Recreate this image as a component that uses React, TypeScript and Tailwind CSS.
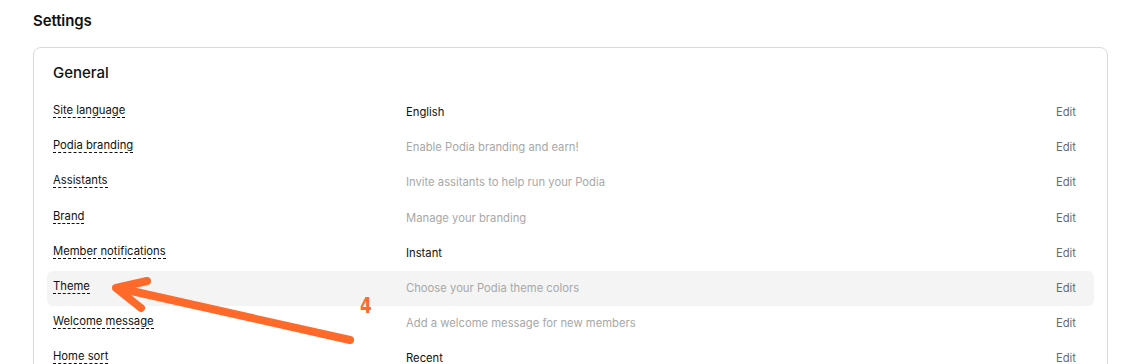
import React from "react";

const rows: { label: string; value: string; muted: boolean; active?: boolean }[] = [
  { label: "Site language", value: "English", muted: false },
  { label: "Podia branding", value: "Enable Podia branding and earn!", muted: true },
  { label: "Assistants", value: "Invite assitants to help run your Podia", muted: true },
  { label: "Brand", value: "Manage your branding", muted: true },
  { label: "Member notifications", value: "Instant", muted: false },
  { label: "Theme", value: "Choose your Podia theme colors", muted: true, active: true },
  { label: "Welcome message", value: "Add a welcome message for new members", muted: true },
  { label: "Home sort", value: "Recent", muted: false },
];

export default function App() {
  return (
    <div
      className="relative w-[1134px] h-[364px] overflow-hidden bg-white"
      style={{ fontFamily: "Inter, 'Liberation Sans', sans-serif" }}
    >
      <div className="pl-[33px] pt-[11px]">
        <h1 className="text-[15px] leading-[20px] font-semibold text-[#111] tracking-[-0.1px]">Settings</h1>
        <div className="mt-[16px] w-[1075px] border border-[#dadada] rounded-[8px] px-[13px] pt-[14px] pb-4">
          <h2 className="pl-[6px] text-[15px] leading-[22px] font-medium text-[#111]">General</h2>
          <div className="mt-[11px] flex flex-col">
            {rows.map((r) => (
              <div
                key={r.label}
                className={`flex items-center h-[35.15px] pl-[6px] pr-[18px] rounded-[6px] text-[11.25px] ${
                  r.active ? "bg-[#f4f4f4]" : ""
                }`}
              >
                <div className="w-[353px] shrink-0">
                  <span className="inline-block leading-[14px] text-[#111] border-b border-dashed border-[#111] -translate-y-[2px]">
                    {r.label}
                  </span>
                </div>
                <div className={`flex-1 ${r.muted ? "text-[#a8a8a8]" : "text-[#111]"}`}>{r.value}</div>
                <div className="text-[#666b73]">Edit</div>
              </div>
            ))}
          </div>
        </div>
      </div>
      <svg
        className="absolute left-0 top-0 pointer-events-none"
        width="1134"
        height="364"
        viewBox="0 0 1134 364"
      >
        <g stroke="#ff6a2a" strokeWidth="8" strokeLinecap="round" strokeLinejoin="round" fill="none">
          <line x1="350" y1="340" x2="118" y2="288" />
          <polyline points="147,281 116,288 141,308" />
        </g>
      </svg>
      <div
        className="absolute left-[360px] top-[294px] text-[#ff6a2a] font-bold text-[21px] leading-[24px] origin-left scale-x-[0.8]"
        style={{ fontFamily: "'DejaVu Sans', sans-serif" }}
      >
        4
      </div>
    </div>
  );
}
